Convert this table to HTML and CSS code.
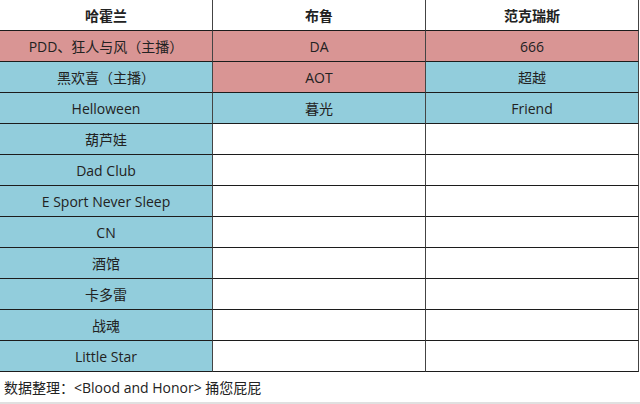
FILE: index.html
```
<!DOCTYPE html>
<html lang="zh-CN">
<head>
<meta charset="utf-8">
<link rel="stylesheet" href="styles.css">
</head>
<body>
<div class="sheet">
  <div class="grid">
    <div class="cell head">哈霍兰</div><div class="cell head">布鲁</div><div class="cell head">范克瑞斯</div>
    <div class="cell pink">PDD、狂人与风（主播）</div><div class="cell pink">DA</div><div class="cell pink">666</div>
    <div class="cell blue">黑欢喜（主播）</div><div class="cell pink">AOT</div><div class="cell blue">超越</div>
    <div class="cell blue">Helloween</div><div class="cell blue">暮光</div><div class="cell blue">Friend</div>
    <div class="cell blue">葫芦娃</div><div class="cell"></div><div class="cell"></div>
    <div class="cell blue">Dad Club</div><div class="cell"></div><div class="cell"></div>
    <div class="cell blue">E Sport Never Sleep</div><div class="cell"></div><div class="cell"></div>
    <div class="cell blue">CN</div><div class="cell"></div><div class="cell"></div>
    <div class="cell blue">酒馆</div><div class="cell"></div><div class="cell"></div>
    <div class="cell blue">卡多雷</div><div class="cell"></div><div class="cell"></div>
    <div class="cell blue">战魂</div><div class="cell"></div><div class="cell"></div>
    <div class="cell blue">Little Star</div><div class="cell"></div><div class="cell"></div>
  </div>
  <div class="footer">
    <div class="note">数据整理：&lt;Blood and Honor&gt; 捅您屁屁</div>
  </div>
</div>
</body>
</html>
```
FILE: styles.css
```
html, body {
  margin: 0;
  padding: 0;
  background: #ffffff;
}
.sheet {
  width: 640px;
  height: 404px;
  font-family: "Open Sans", "Noto Sans CJK SC", sans-serif;
  color: #222;
}
.grid {
  display: grid;
  grid-template-columns: 213px 213px 213px;
  grid-auto-rows: 31px;
}
.cell {
  box-sizing: border-box;
  border-right: 1px solid #444;
  border-bottom: 1px solid #1c1c1c;
  display: flex;
  align-items: center;
  justify-content: center;
  font-size: 14px;
  line-height: 1;
  padding-top: 1px;
}
.head {
  font-weight: bold;
  background: #fff;
}
.pink {
  background: #d99594;
}
.blue {
  background: #92cddc;
}
.footer {
  box-sizing: border-box;
  width: 640px;
  height: 32px;
  border-bottom: 2px solid #e0e0e0;
  display: flex;
  align-items: center;
}
.note {
  padding-left: 4px;
  font-size: 14px;
  color: #222;
}
```
